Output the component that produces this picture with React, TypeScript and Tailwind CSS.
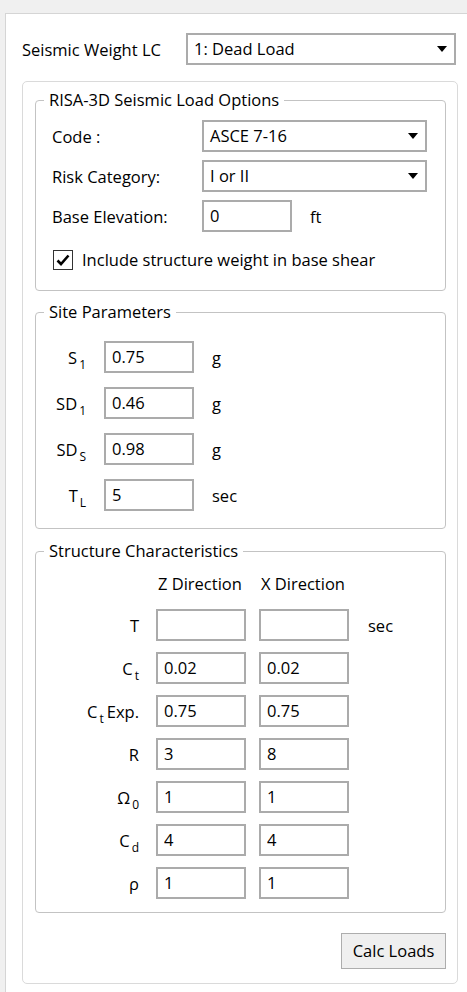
import React from 'react';

const Arrow: React.FC = () => (
  <svg width="10" height="6" viewBox="0 0 10 6" className="shrink-0">
    <polygon points="0,0 10,0 5,6" fill="#000" />
  </svg>
);

const Select: React.FC<{ value: string; className?: string }> = ({ value, className }) => (
  <div
    className={`h-[32px] border-2 border-[#ababab] bg-white flex items-center justify-between pl-[6px] pr-[7px] ${className ?? ''}`}
  >
    <span className="leading-none">{value}</span>
    <Arrow />
  </div>
);

const Field: React.FC<{ value?: string }> = ({ value = '' }) => (
  <input
    readOnly
    value={value}
    className="w-[90px] h-[32px] border-2 border-[#ababab] bg-white pl-[6px] pb-[1px] text-[16.5px] outline-none text-black"
  />
);

const Group: React.FC<{ title: string; className?: string; children: React.ReactNode }> = ({
  title,
  className,
  children,
}) => (
  <div className={`relative border border-[#c3c3c3] rounded-[4px] ${className ?? ''}`}>
    <span className="absolute left-[8px] top-[-12px] px-[5px] bg-white leading-[22px]">{title}</span>
    {children}
  </div>
);

const Sub: React.FC<{ base: string; sub: string; rest?: string }> = ({ base, sub, rest }) => (
  <span>
    {base}
    <span className="text-[12px] relative top-[5px] ml-[2px]">{sub}</span>
    {rest && <span className="ml-[3px]">{rest}</span>}
  </span>
);

const siteRows = [
  { label: <Sub base="S" sub="1" />, value: '0.75', unit: 'g' },
  { label: <Sub base="SD" sub="1" />, value: '0.46', unit: 'g' },
  { label: <Sub base="SD" sub="S" />, value: '0.98', unit: 'g' },
  { label: <Sub base="T" sub="L" />, value: '5', unit: 'sec' },
];

const structRows = [
  { label: <span>T</span>, z: '', x: '', unit: 'sec' },
  { label: <Sub base="C" sub="t" />, z: '0.02', x: '0.02' },
  { label: <Sub base="C" sub="t" rest="Exp." />, z: '0.75', x: '0.75' },
  { label: <span>R</span>, z: '3', x: '8' },
  { label: <Sub base="Ω" sub="0" />, z: '1', x: '1' },
  { label: <Sub base="C" sub="d" />, z: '4', x: '4' },
  { label: <span>ρ</span>, z: '1', x: '1' },
];

const App: React.FC = () => {
  return (
    <div className="w-[467px] h-[992px] overflow-hidden bg-[#f0f0f0] pt-[13px] pl-[5px] font-['Open_Sans',sans-serif] text-[16.5px] text-black">
      <div className="h-full bg-white border-l border-t border-[#d5d5d5] pl-[16px] pr-[9px]">
        {/* seismic weight LC */}
        <div className="flex items-center mt-[19px] mr-[2px]">
          <span className="pt-[3px]">Seismic Weight LC</span>
          <Select value="1: Dead Load" className="ml-auto w-[270px]" />
        </div>

        <div className="mt-[16px] h-[903px] border border-[#dadada] rounded-[5px] pl-[12px] pr-[11px] flex flex-col">
          {/* RISA-3D options */}
          <Group title="RISA-3D Seismic Load Options" className="mt-[18px] h-[191px] pl-[16px] pt-[19px]">
            <div className="flex flex-col gap-[8px]">
              <div className="flex items-center">
                <span className="w-[150px] pt-[3px]">Code :</span>
                <Select value="ASCE 7-16" className="w-[225px]" />
              </div>
              <div className="flex items-center">
                <span className="w-[150px] pt-[3px]">Risk Category:</span>
                <Select value="I or II" className="w-[225px]" />
              </div>
              <div className="flex items-center">
                <span className="w-[150px] pt-[2px]">Base Elevation:</span>
                <Field value="0" />
                <span className="ml-[18px] pt-[2px]">ft</span>
              </div>
            </div>
            <div className="flex items-center mt-[15px] ml-[1px]">
              <div className="w-[20px] h-[20px] border border-[#333] flex items-center justify-center">
                <svg width="14" height="12" viewBox="0 0 14 12">
                  <polyline points="1.5,6.5 5,10 12.5,1.5" fill="none" stroke="#000" strokeWidth="2.6" />
                </svg>
              </div>
              <span className="ml-[9px] pt-[1px]">Include structure weight in base shear</span>
            </div>
          </Group>

          {/* site parameters */}
          <Group title="Site Parameters" className="mt-[21px] h-[217px] pt-[28px]">
            <div className="flex flex-col gap-[14px]">
              {siteRows.map((r, i) => (
                <div key={i} className="flex items-center">
                  <div className="w-[50px] text-right pt-[2px]">{r.label}</div>
                  <div className="ml-[18px]">
                    <Field value={r.value} />
                  </div>
                  <span className="ml-[18px] pt-[3px]">{r.unit}</span>
                </div>
              ))}
            </div>
          </Group>

          {/* structure characteristics */}
          <Group title="Structure Characteristics" className="mt-[22px] h-[362px] pt-[21px]">
            <div className="flex leading-[22px]">
              <span className="ml-[122px] w-[103px]">Z Direction</span>
              <span>X Direction</span>
            </div>
            <div className="flex flex-col gap-[11px] mt-[14px]">
              {structRows.map((r, i) => (
                <div key={i} className="flex items-center">
                  <div className="w-[103px] text-right pt-[2px]">{r.label}</div>
                  <div className="ml-[17px] flex gap-[13px]">
                    <Field value={r.z} />
                    <Field value={r.x} />
                  </div>
                  {r.unit && <span className="ml-[19px] pt-[2px]">{r.unit}</span>}
                </div>
              ))}
            </div>
          </Group>

          <button className="mt-[20px] self-end w-[105px] h-[36px] bg-[#efefef] border border-[#adadad]">
            Calc Loads
          </button>
        </div>
      </div>
    </div>
  );
};

export default App;
